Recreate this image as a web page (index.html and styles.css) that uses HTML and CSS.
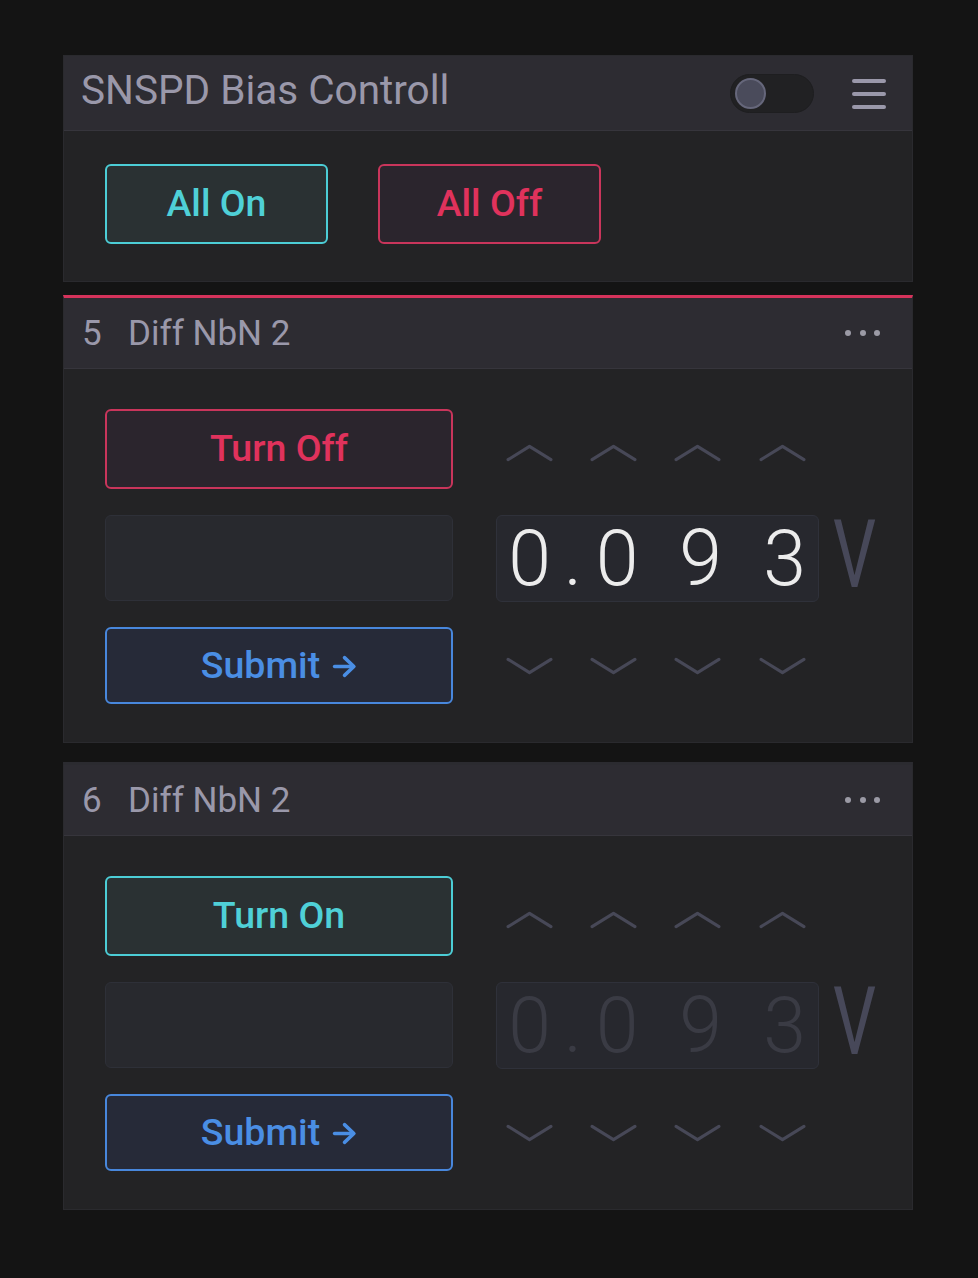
FILE: index.html
```html
<!DOCTYPE html>
<html lang="en">
<head>
<meta charset="utf-8">
<title>SNSPD Bias Controll</title>
<link rel="stylesheet" href="styles.css">
</head>
<body>
<main class="app">
  <section class="panel panel-main">
    <header class="main-head">
      <h1 class="title">SNSPD Bias Controll</h1>
      <div class="toggle"><span class="knob"></span></div>
      <button class="menu" aria-label="Menu">
        <svg width="34" height="31" viewBox="0 0 34 31"><g stroke="#9a98aa" stroke-width="4" stroke-linecap="round"><line x1="2" y1="3" x2="32" y2="3"/><line x1="2" y1="16" x2="32" y2="16"/><line x1="2" y1="29" x2="32" y2="29"/></g></svg>
      </button>
    </header>
    <div class="main-body">
      <button class="btn btn-on btn-all">All On</button>
      <button class="btn btn-off btn-all">All Off</button>
    </div>
  </section>

  <section class="panel channel is-on">
    <header class="chan-head">
      <span class="chan-num">5</span>
      <span class="chan-name">Diff NbN 2</span>
      <span class="dots"><i></i><i></i><i></i></span>
    </header>
    <div class="chan-body">
      <button class="btn btn-off">Turn Off</button>
      <div class="chevrons up">
        <svg viewBox="0 0 46 18"><polyline points="2,16 23,3 44,16"/></svg>
        <svg viewBox="0 0 46 18"><polyline points="2,16 23,3 44,16"/></svg>
        <svg viewBox="0 0 46 18"><polyline points="2,16 23,3 44,16"/></svg>
        <svg viewBox="0 0 46 18"><polyline points="2,16 23,3 44,16"/></svg>
      </div>
      <input class="field" type="text">
      <div class="readout">
        <div class="digits"><span class="d d1">0</span><span class="d dot">.</span><span class="d d2">0</span><span class="d d3">9</span><span class="d d4">3</span></div>
        <span class="unit">V</span>
      </div>
      <button class="btn btn-submit">Submit <svg class="arrow" viewBox="0 0 24 22"><g fill="none" stroke="currentColor" stroke-width="3.4" stroke-linecap="round" stroke-linejoin="round"><line x1="2.5" y1="11" x2="20.5" y2="11"/><polyline points="12,2.5 21,11 12,19.5"/></g></svg></button>
      <div class="chevrons down">
        <svg viewBox="0 0 46 18"><polyline points="2,2 23,15 44,2"/></svg>
        <svg viewBox="0 0 46 18"><polyline points="2,2 23,15 44,2"/></svg>
        <svg viewBox="0 0 46 18"><polyline points="2,2 23,15 44,2"/></svg>
        <svg viewBox="0 0 46 18"><polyline points="2,2 23,15 44,2"/></svg>
      </div>
    </div>
  </section>

  <section class="panel channel is-off">
    <header class="chan-head">
      <span class="chan-num">6</span>
      <span class="chan-name">Diff NbN 2</span>
      <span class="dots"><i></i><i></i><i></i></span>
    </header>
    <div class="chan-body">
      <button class="btn btn-on">Turn On</button>
      <div class="chevrons up">
        <svg viewBox="0 0 46 18"><polyline points="2,16 23,3 44,16"/></svg>
        <svg viewBox="0 0 46 18"><polyline points="2,16 23,3 44,16"/></svg>
        <svg viewBox="0 0 46 18"><polyline points="2,16 23,3 44,16"/></svg>
        <svg viewBox="0 0 46 18"><polyline points="2,16 23,3 44,16"/></svg>
      </div>
      <input class="field" type="text">
      <div class="readout">
        <div class="digits"><span class="d d1">0</span><span class="d dot">.</span><span class="d d2">0</span><span class="d d3">9</span><span class="d d4">3</span></div>
        <span class="unit">V</span>
      </div>
      <button class="btn btn-submit">Submit <svg class="arrow" viewBox="0 0 24 22"><g fill="none" stroke="currentColor" stroke-width="3.4" stroke-linecap="round" stroke-linejoin="round"><line x1="2.5" y1="11" x2="20.5" y2="11"/><polyline points="12,2.5 21,11 12,19.5"/></g></svg></button>
      <div class="chevrons down">
        <svg viewBox="0 0 46 18"><polyline points="2,2 23,15 44,2"/></svg>
        <svg viewBox="0 0 46 18"><polyline points="2,2 23,15 44,2"/></svg>
        <svg viewBox="0 0 46 18"><polyline points="2,2 23,15 44,2"/></svg>
        <svg viewBox="0 0 46 18"><polyline points="2,2 23,15 44,2"/></svg>
      </div>
    </div>
  </section>
</main>
</body>
</html>
```

FILE: styles.css
```css
* { box-sizing: border-box; }

html, body {
  margin: 0;
  background: #141414;
}

body {
  font-family: Roboto, "Noto Sans", sans-serif;
  color: #9a98aa;
}

.app {
  width: 913px;
  padding: 55px 0 0 63px;
}

.panel {
  width: 850px;
  background: #232325;
  border: 1px solid #2a2a2e;
}

/* ---------- main panel ---------- */
.main-head {
  height: 75px;
  display: flex;
  align-items: center;
  padding: 0 26px 0 17px;
  background: #2d2c32;
  border-bottom: 1px solid #36353c;
}

.title {
  margin: 0;
  flex: 1;
  font-size: 40.5px;
  font-weight: 400;
  color: #9a98aa;
  line-height: 1;
  padding-bottom: 5px;
}

.toggle {
  width: 84px;
  height: 39px;
  border-radius: 20px;
  background: #212123;
  border: 1px solid #1e1e20;
  display: flex;
  align-items: center;
  padding-left: 4px;
}

.knob {
  width: 31px;
  height: 31px;
  border-radius: 50%;
  background: #4a4b5b;
  border: 2px solid #66677b;
}

.menu {
  margin-left: 38px;
  padding: 0;
  border: 0;
  background: none;
  display: flex;
}

.menu svg { display: block; }

.main-body {
  height: 150px;
  display: flex;
  gap: 50px;
  padding: 33px 0 0 41px;
}

/* ---------- buttons ---------- */
.btn {
  font-family: Roboto, "Noto Sans", sans-serif;
  font-size: 37.5px;
  font-weight: 500;
  border: 2px solid;
  border-radius: 6px;
  display: flex;
  align-items: center;
  justify-content: center;
  padding: 0 0 2px;
}

.btn-all {
  width: 223px;
  height: 80px;
}

.btn-on {
  color: #4fd0d7;
  border-color: #4ccdd6;
  background: #2a3133;
}

.btn-off {
  color: #e0325c;
  border-color: #c9355b;
  background: #2b252d;
}

.btn-submit {
  color: #4a8ee4;
  border-color: #4887dc;
  background: #262a38;
  gap: 12px;
}

.arrow {
  width: 25px;
  height: 23px;
  margin-top: 3px;
}

/* ---------- channel panels ---------- */
.panel + .panel { margin-top: 13px; }
.channel.is-off { margin-top: 19px; }

.channel { border-top-width: 3px; }
.channel.is-on { border-top-color: #d6335b; }
.channel.is-off { border-top-color: #2b2b30; }

.chan-head {
  height: 71px;
  display: flex;
  align-items: center;
  padding: 0 32px 0 18px;
  background: #2d2c32;
  border-bottom: 1px solid #36353c;
  font-size: 35px;
  line-height: 1;
  color: #9a98aa;
}

.chan-num { width: 46px; }

.chan-name { flex: 1; }

.dots {
  display: flex;
  gap: 8.5px;
}

.dots i {
  width: 6px;
  height: 6px;
  border-radius: 50%;
  background: #9b9aa5;
}

.chan-body {
  display: grid;
  grid-template-columns: 348px 1fr;
  grid-template-rows: 80px 86px 77px;
  column-gap: 34px;
  row-gap: 26px;
  padding: 40px 0 38px 41px;
}

.field {
  width: 348px;
  height: 86px;
  margin: 0;
  background: #28292e;
  border: 1.5px solid #2e3038;
  border-radius: 6px;
}

.chevrons {
  display: grid;
  grid-template-columns: repeat(4, 84.3px);
  justify-items: center;
  align-items: center;
}

.chevrons.up { padding-top: 6px; }
.chevrons.down { padding-top: 1px; }

.chevrons svg {
  width: 47px;
  height: 19px;
  fill: none;
  stroke: #474857;
  stroke-width: 3;
  stroke-linecap: round;
  stroke-linejoin: round;
}

.readout {
  display: flex;
  align-items: center;
}

.digits {
  width: 323px;
  height: 87px;
  margin-left: 9px;
  display: flex;
  align-items: center;
  background: #27282e;
  border: 1.5px solid #2f313a;
  border-radius: 6px;
  font-size: 77px;
  font-weight: 300;
  line-height: 1;
  color: #ececec;
  padding-top: 2px;
}

.is-off .digits { color: #3a3b44; }

.d { text-align: center; }
.d1 { width: 65px; }
.dot { width: 22px; }
.d2 { width: 66px; }
.d3 { width: 101px; }
.d4 { width: 67px; }

.unit {
  margin: 0 0 6px 14px;
  font-size: 94px;
  line-height: 1;
  color: #474859;
  display: inline-block;
  transform: scaleX(0.72);
  transform-origin: left center;
}
```
